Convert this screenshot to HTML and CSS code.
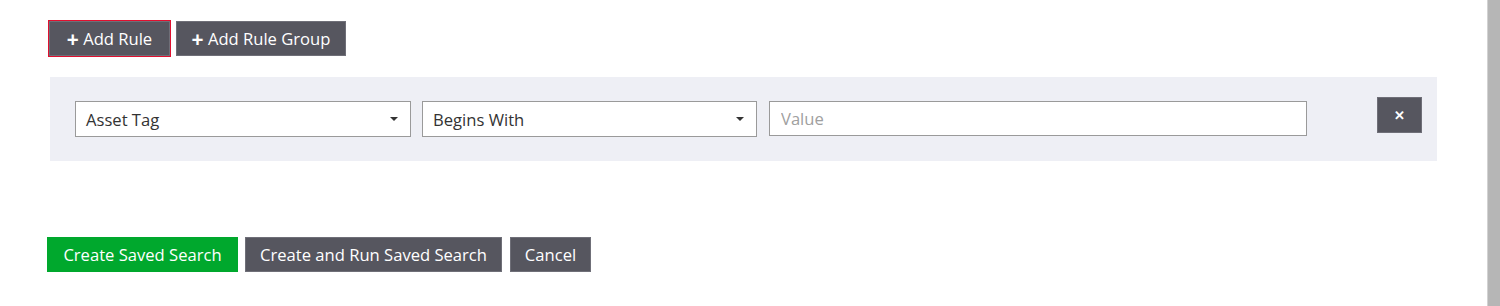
FILE: index.html
```html
<!DOCTYPE html>
<html lang="en">
  <head>
    <meta charset="UTF-8" />
    <meta name="viewport" content="width=device-width, initial-scale=1.0" />
    <title>Saved Search</title>
    <link rel="stylesheet" href="styles.css">
  </head>
  <body>
    <div id="page">
      <main id="builder">
        <section class="toolbar">
          <button class="btn btn-dark add-rule focused"><span class="plus">+</span> Add Rule</button>
          <button class="btn btn-dark add-group"><span class="plus">+</span> Add Rule Group</button>
        </section>

        <section class="group">
          <div class="rule">
            <div class="select field-select">
              <span>Asset Tag</span>
              <span class="caret"></span>
            </div>
            <div class="select op-select">
              <span>Begins With</span>
              <span class="caret"></span>
            </div>
            <input class="value" type="text" placeholder="Value" />
            <button class="btn btn-dark remove">&#x2715;</button>
          </div>
        </section>

        <section class="actions">
          <button class="btn btn-green create">Create Saved Search</button>
          <button class="btn btn-dark create-run">Create and Run Saved Search</button>
          <button class="btn btn-dark cancel">Cancel</button>
        </section>
      </main>
      <aside class="scrollbar"></aside>
    </div>
  </body>
</html>
```

FILE: styles.css
```css
* {
  box-sizing: border-box;
}

html,
body {
  margin: 0;
  padding: 0;
  height: 100%;
  background: #fff;
  font-family: "Open Sans", Arial, sans-serif;
  font-size: 16px;
  color: #333;
}

#page {
  display: flex;
  height: 100%;
}

#builder {
  flex: 1;
  padding: 20px 50px 0 48px;
}

.scrollbar {
  width: 13px;
  background: #b6b6b6;
  border-left: 1px solid #d2d2d2;
}

.btn {
  font-family: inherit;
  font-size: 16.6px;
  color: #fff;
  border: 1px solid #6f6f78;
  height: 35px;
  padding: 1px 0 0;
  cursor: pointer;
  line-height: 1;
  text-align: center;
}

.btn-dark {
  background: #56565f;
}

.btn-green {
  background: #00a82d;
  border-color: #00a82d;
}

.plus {
  font-size: 21px;
  font-weight: 700;
  vertical-align: -2px;
}

.toolbar {
  display: flex;
  align-items: center;
  gap: 6px;
  padding-left: 1px;
  height: 37px;
}

.add-rule {
  width: 121px;
}

.add-group {
  width: 170px;
}

.focused {
  outline: 1px solid #e0102f;
}

.group {
  margin: 20px 0 0 2px;
  background: #eeeff5;
  padding: 24px 15px 24px 25px;
}

.rule {
  display: flex;
  align-items: flex-start;
}

.select {
  display: flex;
  align-items: center;
  justify-content: space-between;
  height: 36px;
  background: #fff;
  border: 1px solid #9a9a9a;
  padding: 0 12px 0 10px;
  margin-right: 11px;
  font-size: 16.6px;
}

.field-select {
  width: 336px;
}

.op-select {
  width: 335px;
  margin-right: 12px;
}

.caret {
  width: 0;
  height: 0;
  border-left: 4px solid transparent;
  border-right: 4px solid transparent;
  border-top: 4px solid #333;
}

.value {
  width: 538px;
  height: 35px;
  border: 1px solid #9a9a9a;
  padding: 0 11px;
  font-family: inherit;
  font-size: 16.6px;
  color: #333;
}

.value::placeholder {
  color: #a0a0a0;
}

.remove {
  width: 45px;
  height: 36px;
  margin: -4px 0 0 auto;
  font-size: 13px;
  font-weight: 700;
  padding: 0;
}

.actions {
  display: flex;
  gap: 7px;
  margin-top: 76px;
  margin-left: -1px;
}

.create {
  width: 191px;
}

.create-run {
  width: 257px;
}

.cancel {
  width: 81px;
  margin-left: 1px;
}
```
